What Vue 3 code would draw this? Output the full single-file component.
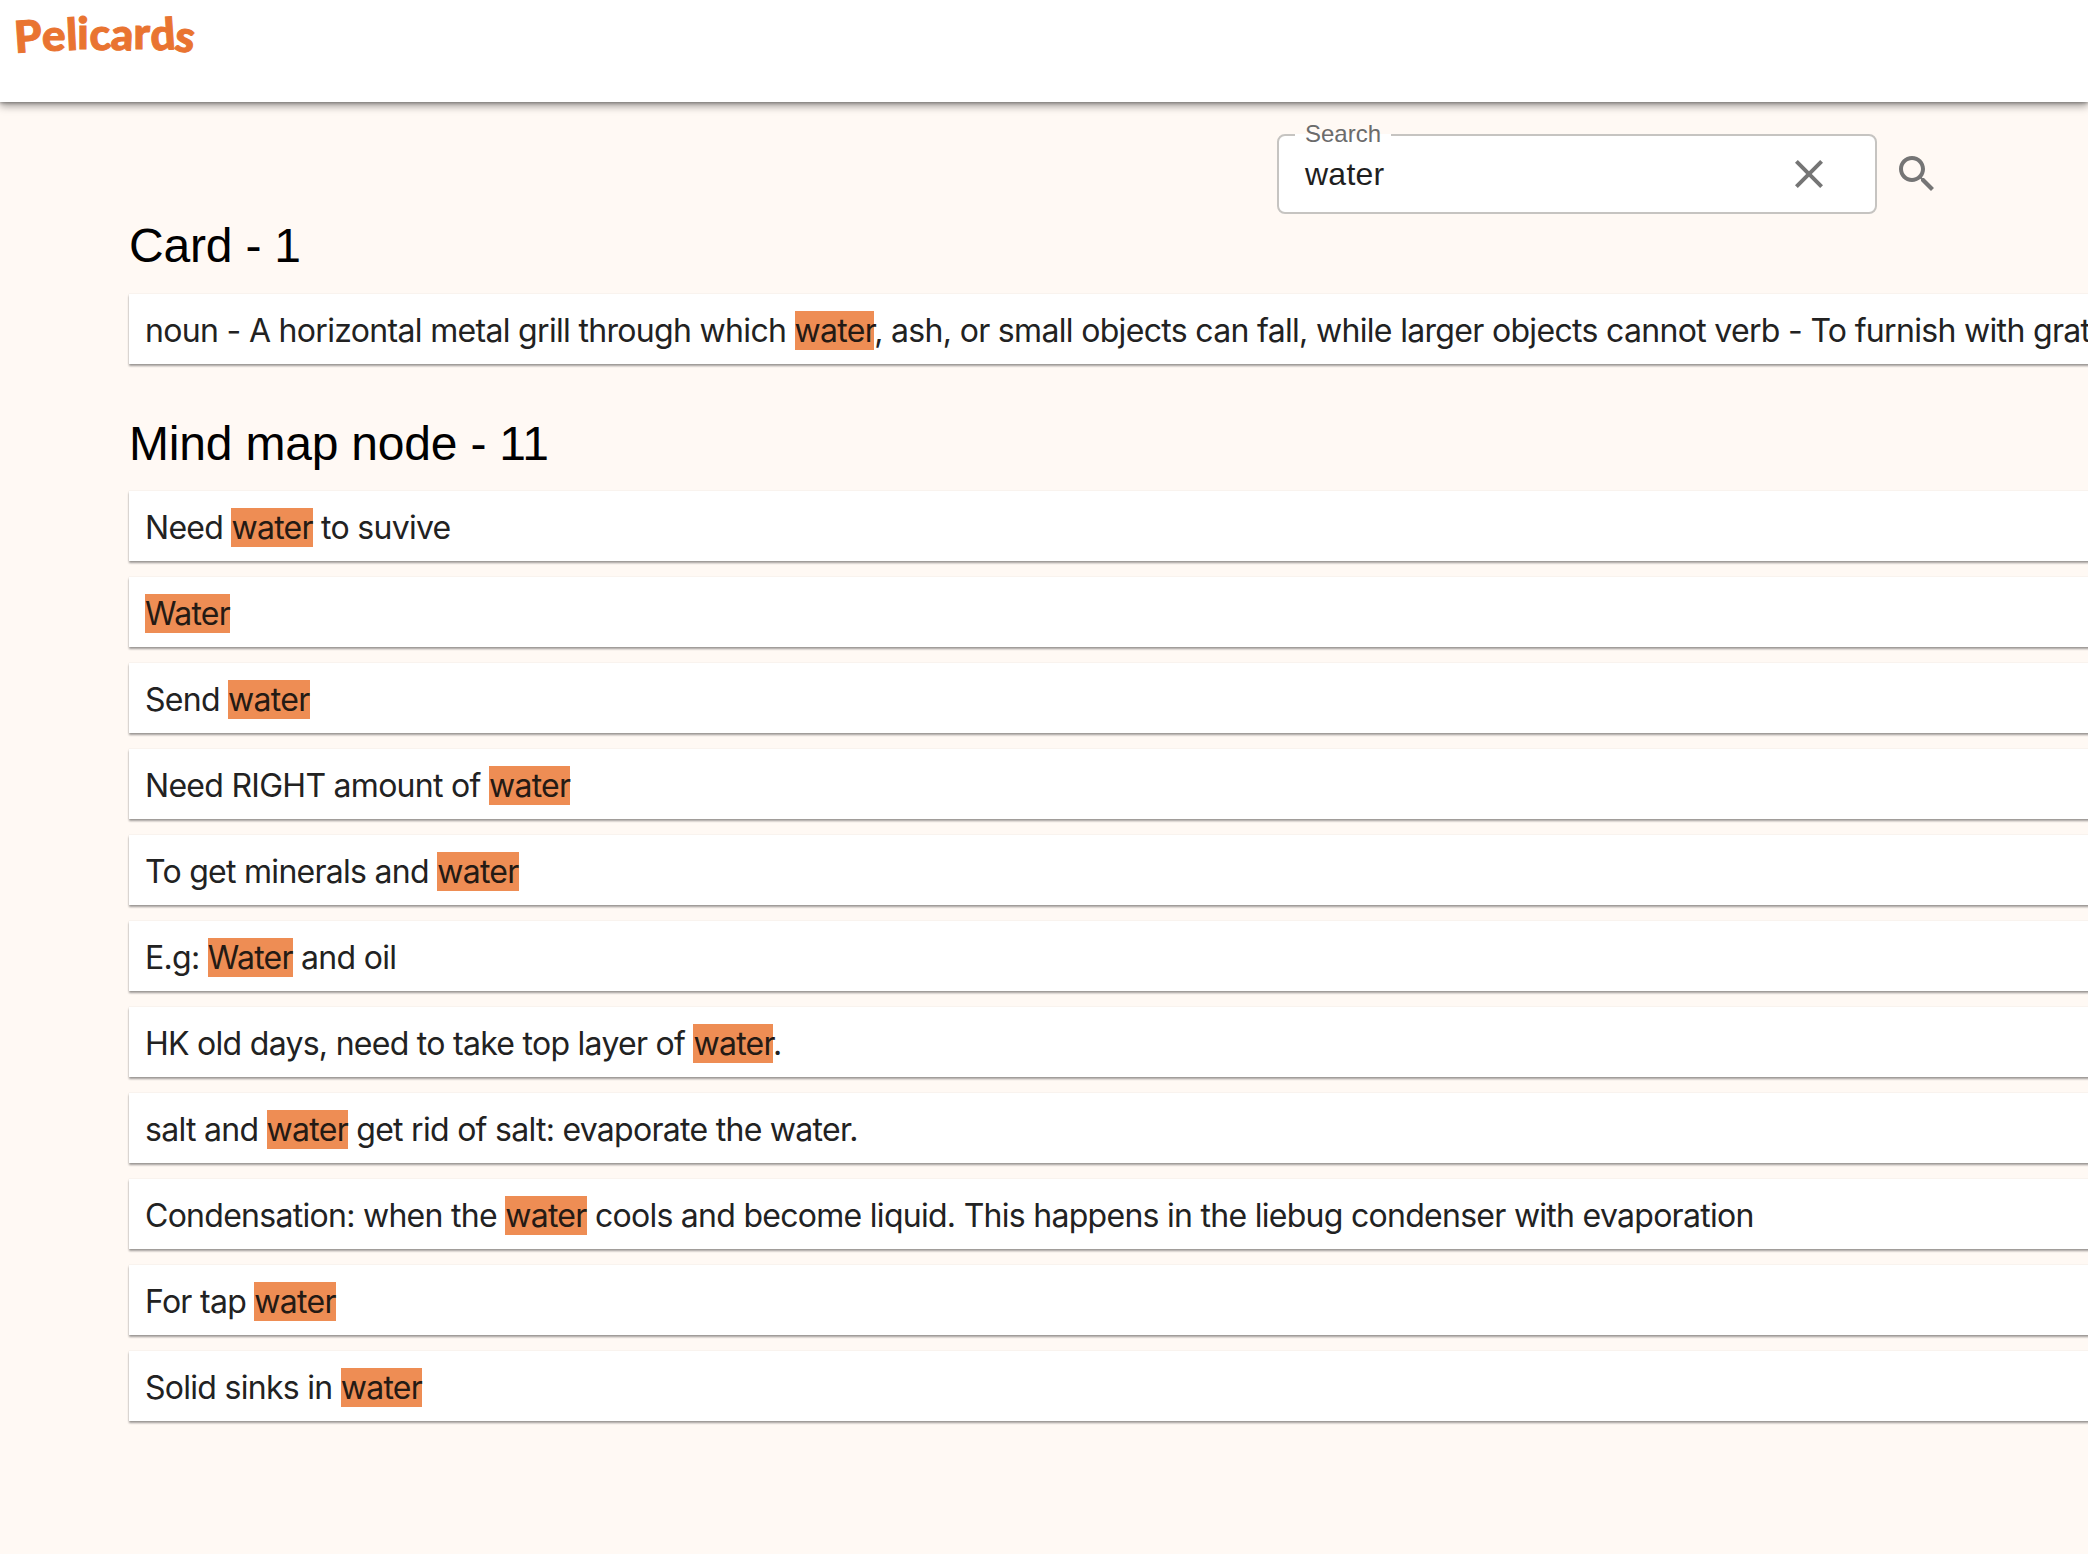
<script setup>
const logo = 'Pelicards'.split('')
const nodes = [
  [['Need '], ['water', 1], [' to suvive']],
  [['Water', 1]],
  [['Send '], ['water', 1]],
  [['Need RIGHT amount of '], ['water', 1]],
  [['To get minerals and '], ['water', 1]],
  [['E.g: '], ['Water', 1], [' and oil']],
  [['HK old days, need to take top layer of '], ['water', 1], ['.']],
  [['salt and '], ['water', 1], [' get rid of salt: evaporate the water.']],
  [['Condensation: when the '], ['water', 1], [' cools and become liquid. This happens in the liebug condenser with evaporation']],
  [['For tap '], ['water', 1]],
  [['Solid sinks in '], ['water', 1]],
]
const card = [['noun - A horizontal metal grill through which '], ['water', 1], [', ash, or small objects can fall, while larger objects cannot verb - To furnish with grat']]
</script>

<template>
  <div class="page">
    <header class="bar">
      <div class="logo"><span v-for="(c, i) in logo" :key="i" class="ch">{{ c }}</span></div>
    </header>
    <main class="content">
      <div class="search-row">
        <div class="field">
          <span class="legend">Search</span>
          <span class="value">water</span>
          <svg class="clear" viewBox="0 0 24 24"><path d="M19 6.41 17.59 5 12 10.59 6.41 5 5 6.41 10.59 12 5 17.59 6.41 19 12 13.41 17.59 19 19 17.59 13.41 12z"/></svg>
        </div>
        <svg class="mag" viewBox="0 0 24 24"><path d="M15.5 14h-.79l-.28-.27C15.41 12.59 16 11.11 16 9.5 16 5.91 13.09 3 9.5 3S3 5.91 3 9.5 5.91 16 9.5 16c1.61 0 3.09-.59 4.23-1.57l.27.28v.79l5 4.99L20.49 19l-4.99-5zm-6 0C7.01 14 5 11.99 5 9.5S7.01 5 9.5 5 14 7.01 14 9.5 11.99 14 9.5 14z"/></svg>
      </div>
      <h2 class="title first">Card - 1</h2>
      <div class="row card-row">
        <span class="line"><template v-for="(p, j) in card" :key="j"><mark v-if="p[1]">{{ p[0] }}</mark><template v-else>{{ p[0] }}</template></template></span>
      </div>
      <h2 class="title">Mind map node - 11</h2>
      <div v-for="(n, i) in nodes" :key="i" class="row">
        <span class="line"><template v-for="(p, j) in n" :key="j"><mark v-if="p[1]">{{ p[0] }}</mark><template v-else>{{ p[0] }}</template></template></span>
      </div>
    </main>
  </div>
</template>

<style>
html, body { margin: 0; background: #fff9f4; overflow: hidden; }
</style>

<style scoped>
.page { width: 2088px; height: 1554px; overflow: hidden; background: #fff9f4; font-family: "Inter", "Liberation Sans", sans-serif; }
.bar { height: 102px; background: #fff; box-shadow: 0 4px 8px rgba(0,0,0,.38), 0 1px 3px rgba(0,0,0,.3); position: relative; }
.logo { display: flex; padding: 11px 0 0 14px; font-family: "Lato", sans-serif; font-weight: 900; font-size: 44px; line-height: 44px; color: #e97431; -webkit-text-stroke: 1px #e97431; letter-spacing: 0.3px; }
.ch { display: inline-block; }
.ch:nth-child(1) { transform: rotate(-4deg) translateY(2px); }
.ch:nth-child(2) { transform: translateY(1px); }
.ch:nth-child(3) { transform: rotate(-3deg); }
.ch:nth-child(4) { transform: translateY(-1px); }
.ch:nth-child(5) { transform: rotate(-5deg); }
.ch:nth-child(6) { transform: rotate(3deg); }
.ch:nth-child(7) { transform: translateY(-1px); }
.ch:nth-child(8) { transform: rotate(-4deg); }
.ch:nth-child(9) { transform: rotate(8deg) translateY(2px); }
.content { padding: 0 0 0 129px; }
.search-row { display: flex; align-items: center; padding: 32px 0 0 1148px; }
.field { box-sizing: border-box; width: 600px; height: 80px; border: 2px solid #c6c4c1; border-radius: 8px; background: #fff; display: flex; align-items: center; padding: 0 42px 0 26px; position: relative; }
.legend { position: absolute; left: 16px; top: -12px; padding: 0 10px; height: 20px; line-height: 20px; font-size: 24px; color: #6b6b6b; background: linear-gradient(#fff9f4 50%, #fff 50%); font-family: "Liberation Sans", sans-serif; }
.value { flex: 1; font-size: 32px; line-height: 36px; color: #1f1f1f; font-family: "Liberation Sans", sans-serif; letter-spacing: 0.25px; }
.clear { width: 48px; height: 48px; fill: #757575; }
.mag { width: 48px; height: 48px; fill: #757575; margin-left: 16px; }
.title { font-family: "Liberation Sans", sans-serif; font-weight: 400; font-size: 48px; line-height: 56px; color: #000; letter-spacing: -0.2px; margin: 52px 0 19px; }
.title.first { margin: 4px 0 20px; }
.row { box-sizing: border-box; height: 70px; margin-bottom: 16px; width: 2100px; background: #fff; box-shadow: 0 2px 2px rgba(0,0,0,.38), 0 0 1px rgba(0,0,0,.14); display: flex; align-items: center; padding: 2px 0 0 16px; font-size: 32px; letter-spacing: -0.72px; color: #222; white-space: nowrap; }
.card-row { letter-spacing: -0.68px; }
mark { background: #ee8d54; color: #241a14; }
</style>
